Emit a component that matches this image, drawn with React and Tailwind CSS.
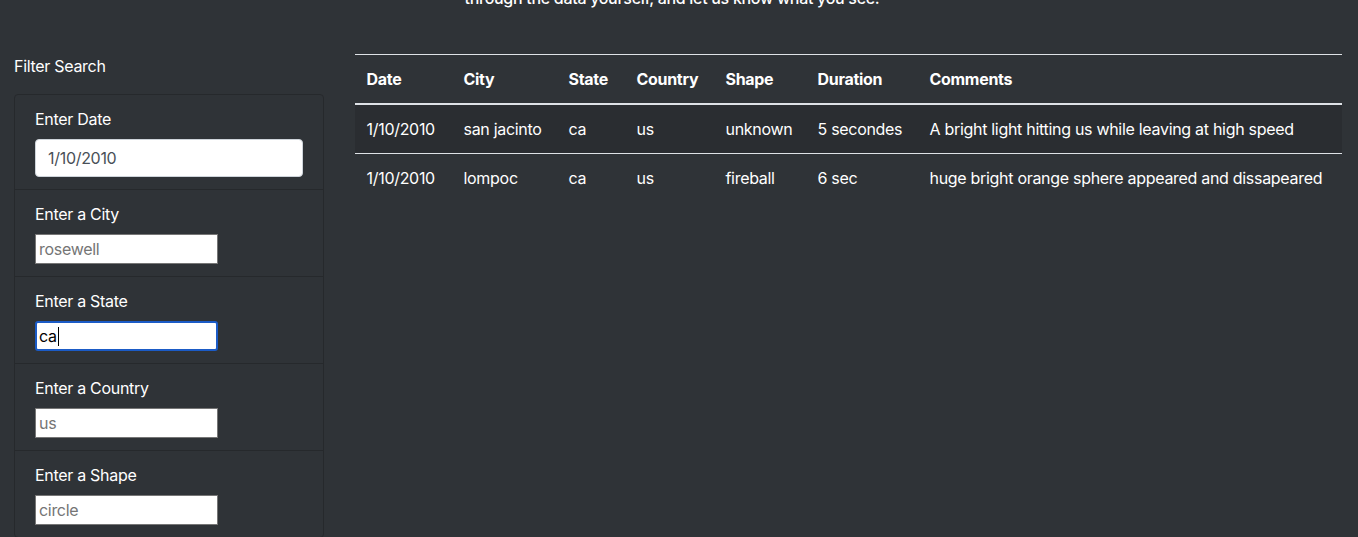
import React from "react";

const rows = [
  ["1/10/2010", "san jacinto", "ca", "us", "unknown", "5 secondes", "A bright light hitting us while leaving at high speed"],
  ["1/10/2010", "lompoc", "ca", "us", "fireball", "6 sec", "huge bright orange sphere appeared and dissapeared"],
];

const heads = ["Date", "City", "State", "Country", "Shape", "Duration", "Comments"];

function Item({ label, children, last }) {
  return (
    <div className={"px-5 py-3 border-[#26292c] " + (last ? "" : "border-b")}>
      <div className="leading-6 mb-2 text-white">{label}</div>
      {children}
    </div>
  );
}

function PlainInput({ placeholder }) {
  return (
    <input
      readOnly
      placeholder={placeholder}
      className="block w-[183px] h-[30px] px-[3px] bg-white border border-[#767676] text-[16px] text-black placeholder:text-[#757575] outline-none tracking-[-0.3px]"
    />
  );
}

export default function App() {
  return (
    <div
      className="min-h-screen h-[537px] overflow-hidden bg-[#2f3337] text-white text-[16px] tracking-[-0.3px]"
      style={{ fontFamily: "Inter, 'Liberation Sans', sans-serif" }}
    >
      <div className="-mt-[14px] h-6 leading-6 text-center font-medium">
        <span className="inline-block -translate-x-[7px]">through the data yourself, and let us know what you see.</span>
      </div>
      <div className="mt-[44px] flex">
        <div className="w-[339.5px] shrink-0 pl-[14px] pr-[16px]">
          <div className="leading-6 mb-4">Filter Search</div>
          <div className="border border-[#26292c] rounded">
            <Item label="Enter Date">
              <div className="w-full h-[38px] bg-white border border-[#ced4da] rounded px-3 flex items-center text-[#495057]">
                1/10/2010
              </div>
            </Item>
            <Item label="Enter a City">
              <PlainInput placeholder="rosewell" />
            </Item>
            <Item label="Enter a State">
              <div className="relative w-[183px] h-[30px] bg-white border-2 border-[#1b5bc6] rounded-[3px] px-[2px] flex items-center text-black">
                ca
                <span className="inline-block w-px h-[19px] bg-black ml-[1px]" />
              </div>
            </Item>
            <Item label="Enter a Country">
              <PlainInput placeholder="us" />
            </Item>
            <Item label="Enter a Shape" last>
              <PlainInput placeholder="circle" />
            </Item>
          </div>
        </div>
        <div className="flex-1 pl-[15px] pr-[16px]">
          <table className="w-full table-fixed border-collapse">
            <colgroup>
              <col className="w-[97px]" />
              <col className="w-[105px]" />
              <col className="w-[68px]" />
              <col className="w-[89px]" />
              <col className="w-[92px]" />
              <col className="w-[112px]" />
              <col />
            </colgroup>
            <thead>
              <tr>
                {heads.map((h) => (
                  <th key={h} className="text-left font-bold px-3 py-3 leading-6 border-t border-[#dee2e6] border-b-2 border-b-[#dee2e6] whitespace-nowrap">
                    {h}
                  </th>
                ))}
              </tr>
            </thead>
            <tbody>
              {rows.map((r, i) => (
                <tr key={i} className={i === 0 ? "bg-[#2a2d31]" : ""}>
                  {r.map((c, j) => (
                    <td key={j} className={"px-3 py-3 leading-6 whitespace-nowrap " + (i === 0 ? "" : "border-t border-[#dee2e6]")}>
                      {c}
                    </td>
                  ))}
                </tr>
              ))}
            </tbody>
          </table>
        </div>
      </div>
    </div>
  );
}
